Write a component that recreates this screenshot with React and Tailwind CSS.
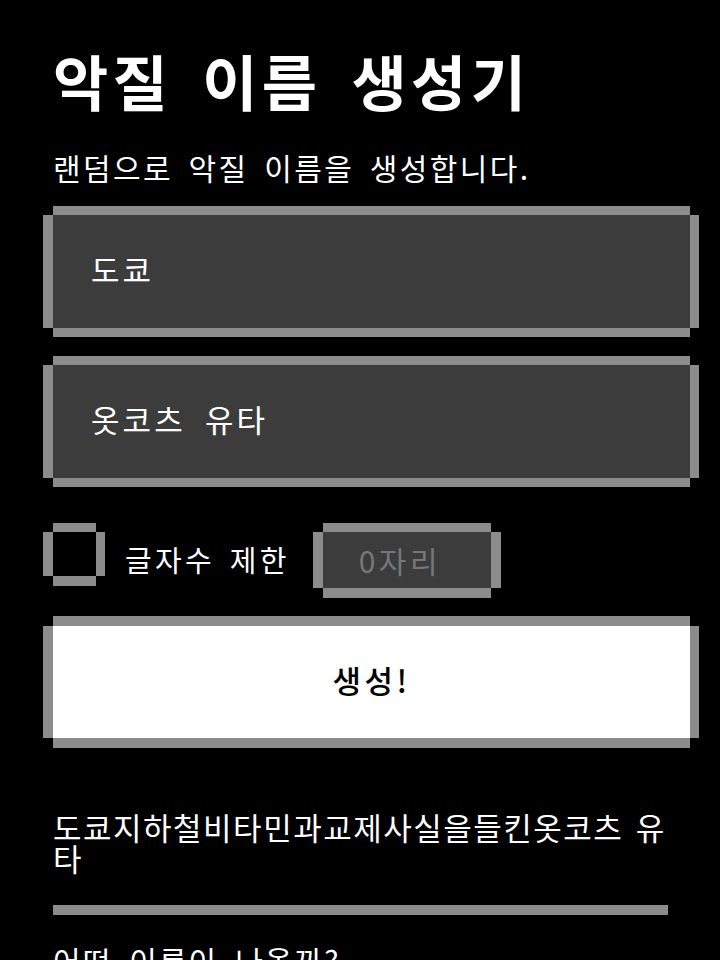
import React, { useState } from "react";

const FONT = "font-['Noto_Sans_CJK_KR','Noto_Sans',sans-serif]";
const BIG_FRAME =
  "shadow-[0_-9px_0_#8c8c8c,0_9px_0_#8c8c8c,-10px_0_0_#8c8c8c,9px_0_0_#8c8c8c]";
const BUTTON_FRAME =
  "shadow-[0_-10px_0_#8c8c8c,0_10px_0_#8c8c8c,-10px_0_0_#8c8c8c,9px_0_0_#8c8c8c]";
const SMALL_FRAME =
  "shadow-[0_-9px_0_#8c8c8c,0_10px_0_#8c8c8c,-10px_0_0_#8c8c8c,10px_0_0_#8c8c8c]";

const TextField = ({ value, onChange, className }) => (
  <input
    value={value}
    onChange={(e) => onChange(e.target.value)}
    className={`block w-[637px] h-[113px] bg-[#3c3c3c] pl-[38px] pb-[6px] text-[31px] tracking-[3.1px] [word-spacing:9px] text-white outline-none ${BIG_FRAME} ${className}`}
  />
);

export default function App() {
  const [place, setPlace] = useState("도쿄");
  const [name, setName] = useState("옷코츠 유타");
  const [limit, setLimit] = useState(false);

  return (
    <div className={`h-[960px] overflow-hidden bg-black px-[53px] text-white ${FONT}`}>
      <h1 className="pt-[42px] h-[118px] text-[60px] leading-[76px] font-bold tracking-[4.4px] [word-spacing:12px] whitespace-nowrap">
        악질 이름 생성기
      </h1>
      <p className="mt-[28px] h-[60px] text-[30px] leading-[42px] tracking-[2.4px] [word-spacing:6.5px] whitespace-nowrap">
        랜덤으로 악질 이름을 생성합니다.
      </p>

      <TextField value={place} onChange={setPlace} className="mt-[9px]" />
      <TextField value={name} onChange={setName} className="mt-[37px]" />

      <div className="mt-[54px] flex items-start">
        <button
          onClick={() => setLimit(!limit)}
          aria-label="글자수 제한"
          className="w-[43px] h-[44px] shrink-0 bg-black shadow-[0_-9px_0_#8c8c8c,0_10px_0_#8c8c8c,-10px_0_0_#8c8c8c,9px_0_0_#8c8c8c]"
        />
        <span className="ml-[29px] self-center text-[29px] tracking-[3.3px] [word-spacing:5px] whitespace-nowrap">
          글자수 제한
        </span>
        <input
          placeholder="0자리"
          className={`ml-[33px] w-[168px] h-[56px] bg-[#3c3c3c] pl-[36px] text-[30px] tracking-[3.5px] text-white placeholder:text-[#777777] outline-none ${SMALL_FRAME}`}
        />
      </div>

      <button
        className={`mt-[38px] block w-[637px] h-[112px] bg-white pb-[4px] text-[31px] font-medium tracking-[3.5px] text-black ${BUTTON_FRAME}`}
      >
        생성!
      </button>

      <p className="mt-[73px] w-[615px] text-[31px] leading-[31px] tracking-[1.5px] [word-spacing:4px]">
        도쿄지하철비타민과교제사실을들킨옷코츠 유타
      </p>

      <hr className="mt-[32px] w-[615px] h-[10px] border-0 bg-[#8c8c8c]" />

      <h2 className="mt-[25px] text-[30px] leading-[40px] tracking-[2.1px] [word-spacing:8px] whitespace-nowrap">
        어떤 이름이 나올까?
      </h2>
    </div>
  );
}
